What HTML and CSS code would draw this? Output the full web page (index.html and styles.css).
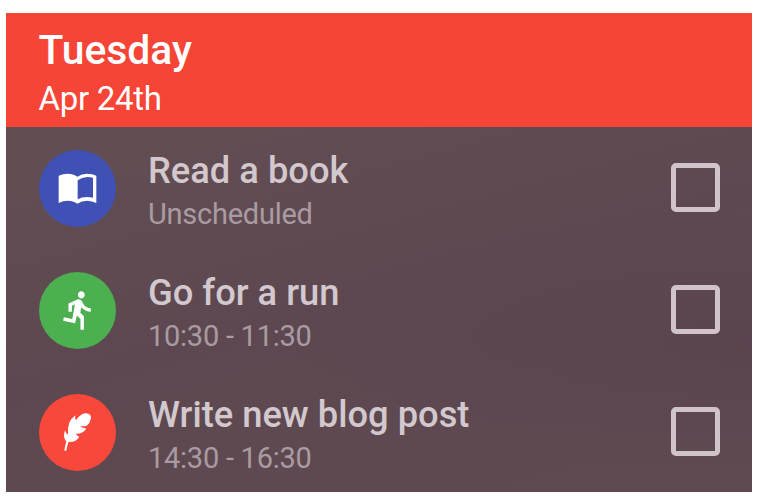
FILE: index.html
```html
<!DOCTYPE html>
<html lang="en">
<head>
<meta charset="utf-8">
<title>Tuesday</title>
<link rel="stylesheet" href="styles.css">
</head>
<body>
<main class="agenda">
  <header class="header">
    <h1 class="day">Tuesday</h1>
    <p class="date">Apr 24th</p>
  </header>
  <ul class="tasks">
    <li class="task">
      <svg class="icon icon-book" viewBox="26 28 231 231" aria-hidden="true">
        <path fill-rule="evenodd" d="M85 105Q98 99 112 99Q129 99 141 108Q154 99 171 99Q186 99 198 105V187Q185 181 171 180Q154 180 141 189Q129 180 112 180Q98 180 85 187ZM142 119V176Q154 169 170 169Q179 169 188 171V111Q180 109 171 109Q154 110 142 119Z"/>
      </svg>
      <div class="text">
        <h2 class="title">Read a book</h2>
        <p class="time">Unscheduled</p>
      </div>
      <span class="checkbox" role="checkbox" aria-checked="false"></span>
    </li>
    <li class="task">
      <svg class="icon icon-run" viewBox="26 28 231 231" aria-hidden="true">
        <path transform="translate(83.5 78) scale(5.15 5.35)" d="M13.49 5.48c1.1 0 2-.9 2-2s-.9-2-2-2-2 .9-2 2 .9 2 2 2zm-3.6 13.9l1-4.4 2.1 2v6h2v-7.5l-2.1-2 .6-3c1.3 1.5 3.3 2.5 5.5 2.5v-2c-1.9 0-3.5-1-4.3-2.4l-1-1.6c-.4-.6-1-1-1.7-1-.3 0-.5.1-.8.1l-5.2 2.2v4.7h2v-3.4l1.8-.7-1.6 8.1-4.9-1-.4 2 7 1.4z"/>
      </svg>
      <div class="text">
        <h2 class="title">Go for a run</h2>
        <p class="time">10:30 - 11:30</p>
      </div>
      <span class="checkbox" role="checkbox" aria-checked="false"></span>
    </li>
    <li class="task">
      <svg class="icon icon-feather" viewBox="26 25.5 231 231" aria-hidden="true">
        <path d="M102 196Q103 182 108 169Q102 162 101 152Q101 142 104 134Q106 143 113 148Q111 128 117 111Q123 98 135 89Q133 97 137 104Q145 92 155 86Q166 81 177 86Q184 91 181 102Q178 114 171 119Q162 124 149 122Q156 128 168 129Q163 139 154 142Q144 146 136 144Q139 151 147 154Q141 165 130 168Q121 170 115 169Q110 181 108 196Z"/>
      </svg>
      <div class="text">
        <h2 class="title">Write new blog post</h2>
        <p class="time">14:30 - 16:30</p>
      </div>
      <span class="checkbox" role="checkbox" aria-checked="false"></span>
    </li>
  </ul>
</main>
</body>
</html>
```
FILE: styles.css
```css
* {
  box-sizing: border-box;
  margin: 0;
  padding: 0;
}

body {
  background: #fff;
  font-family: Roboto, sans-serif;
  padding: 13px 6px 12px;
  overflow: hidden;
}

.agenda {
  height: 479px;
  overflow: hidden;
  background:
    radial-gradient(ellipse 480px 130px at 100% 69%, rgba(88, 65, 79, 0.7), rgba(88, 65, 79, 0)),
    linear-gradient(165deg, #624d53 25%, #5d4851 55%, #5f4a51 100%);
}

.header {
  height: 114px;
  padding: 12px 32.5px 0;
  background: #f64436;
  color: #fff;
}

.day {
  font-size: 40.8px;
  line-height: 50px;
  font-weight: 500;
}

.date {
  font-size: 33px;
  line-height: 48px;
  letter-spacing: -0.3px;
}

.tasks {
  list-style: none;
}

.task {
  display: flex;
  align-items: center;
  height: 122px;
  padding: 0 32.5px 1px;
}

.icon {
  width: 77px;
  height: 77px;
  margin-top: 1px;
  border-radius: 50%;
  fill: #fff;
}

.icon-book {
  background: #3f51b5;
}

.icon-run {
  background: #4caf50;
}

.icon-feather {
  background: #f7483b;
}

.text {
  flex: 1;
  margin-left: 32.5px;
  padding-top: 9px;
}

.title {
  font-size: 36.3px;
  line-height: 44px;
  font-weight: 500;
  color: #d2c8cd;
}

.time {
  font-size: 29px;
  line-height: 42px;
  letter-spacing: -0.25px;
  color: #a99ba1;
}

.checkbox {
  width: 49px;
  height: 49px;
  border: 5px solid #d0c4ca;
  border-radius: 5px;
}
```
